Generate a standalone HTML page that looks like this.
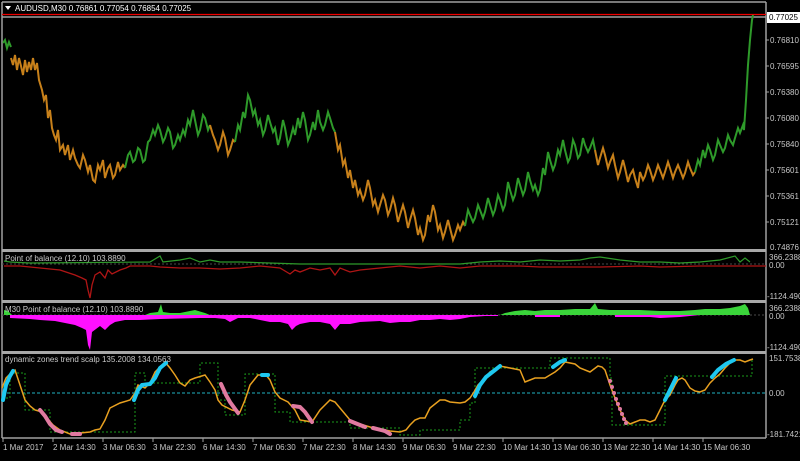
<!DOCTYPE html><html><head><style>
body{margin:0;background:#000;width:800px;height:456px;overflow:hidden;font-family:"Liberation Sans",sans-serif}
svg text{font-family:"Liberation Sans",sans-serif;font-size:8px;fill:#c8c8c8}
</style></head><body>
<svg width="800" height="456" viewBox="0 0 800 456" xmlns="http://www.w3.org/2000/svg">
<rect width="800" height="456" fill="#000"/>
<g fill="none" stroke="#a0a0a0" stroke-width="1.5">
<line x1="2" y1="2" x2="766" y2="2"/>
<line x1="2" y1="2" x2="2" y2="438"/>
<line x1="766" y1="2" x2="766" y2="438"/>
<line x1="2" y1="438" x2="766" y2="438"/>
<line x1="2" y1="17" x2="766" y2="17"/>
</g>
<rect x="2" y="249" width="764" height="3" fill="#a8a8a8"/>
<rect x="2" y="300" width="764" height="3" fill="#a8a8a8"/>
<rect x="2" y="351" width="764" height="3" fill="#a8a8a8"/>
<line x1="2" y1="14.5" x2="766" y2="14.5" stroke="#e00" stroke-width="1.2"/>
<path d="M5 6 L11 6 L8 10Z" fill="#fff"/>
<text x="15" y="11" style="fill:#fff">AUDUSD,M30  0.76861 0.77054 0.76854 0.77025</text>
<g fill="none" stroke-width="2" stroke-linejoin="miter">
<polyline stroke="#2e9a2a" points="3,43 5,40 7,48 9,42 11,47"/>
<polyline stroke="#c7801a" points="11,58 13,65 15,55 17,70 19,58 21,66 23,75 25,60 27,72 29,62 31,70 33,58 35,70 37,63 39,80 42,90 44,100 46,95 48,118 50,110 52,128 54,135 56,140 58,130 60,150 63,145 65,155 68,145 70,160 73,150 75,158 78,165 80,168 83,155 85,160 88,172 90,165 93,180 95,182 98,165 100,170 103,160 105,178 108,168 110,165 113,178 115,175 118,162 120,170 123,165 125,168"/>
<polyline stroke="#2e9a2a" points="125,168 128,155 130,152 133,162 135,160 138,148 140,150 143,162 145,160 148,142 150,140 153,130 155,135 158,125 160,130 163,142 165,138 168,128 170,132 173,148 175,145 178,135 180,140 183,130 185,135 188,120 190,125 193,110 195,120 198,135 200,130 203,115 205,118 208,130 210,125"/>
<polyline stroke="#c7801a" points="210,125 213,135 215,140 218,150 220,145 223,132 225,138 228,155 230,150 233,140 235,142"/>
<polyline stroke="#2e9a2a" points="235,142 238,125 240,130 243,112 245,118 248,95 250,100 253,115 255,110 258,125 260,120 263,135 265,130 268,115 270,122 273,132 275,128 278,145 280,138 283,120 285,128 288,145 290,140 293,128 295,135 298,118 300,128 303,112 305,120 308,140 310,135 313,122 315,130 318,110 320,122 323,130 325,125 328,112 330,118 333,128 335,132"/>
<polyline stroke="#c7801a" points="335,132 338,150 340,145 343,165 345,160 348,178 350,170 353,188 355,180 358,195 360,190 363,200 365,195 368,180 370,188 373,205 375,200 378,212 380,205 383,195 385,200 388,215 390,210 393,198 395,205 398,222 400,215 403,205 405,212 408,228 410,220 413,210 415,218 418,235 420,228 423,240 425,235 428,215 430,222 433,205 435,212 438,230 440,225 443,238 445,232 448,220 450,228 453,240 455,235 458,225 460,230 463,222 465,226"/>
<polyline stroke="#2e9a2a" points="465,226 468,210 470,215 473,222 475,218 478,205 480,210 483,218 485,212 488,198 490,205 493,215 495,210 498,195 500,200 503,210 505,205 508,182 510,190 513,200 515,195 518,178 520,185 523,195 525,190 528,172 530,180 533,190 535,185 538,195 540,190 543,168 545,175 548,152 550,160 553,170 555,165 558,150 560,155 563,140 565,150 568,162 570,158 573,140 575,145 578,158 580,155 583,138 585,145 588,152 590,148 593,140 595,150"/>
<polyline stroke="#c7801a" points="595,150 598,165 600,158 603,148 605,155 608,168 610,162 613,155 615,165 618,178 620,172 623,160 625,168 628,182 630,175 633,170 635,178 638,188 640,172 643,180 645,176 648,165 650,170 653,180 655,175 658,165 660,170 663,178 665,172 668,162 670,168 673,178 675,172 678,165 680,170 683,178 685,173 688,162 690,168 693,175 695,172"/>
<polyline stroke="#2e9a2a" points="695,172 698,160 700,165 703,150 705,158 708,145 710,150 713,160 715,155 718,140 720,145 723,152 725,148 728,135 730,140 733,145 735,138 738,128 740,133 743,125 744,130 746,100 748,65 750,40 752,20 753,15"/>
</g>
<line x1="2" y1="264" x2="766" y2="264" stroke="#4a4a4a" stroke-dasharray="2,2"/>
<polyline fill="none" stroke="#b01515" stroke-width="1.3" points="4,266 20,266 40,268 60,270 75,275 82,278 86,280 88,290 90,298 92,285 95,275 100,272 105,278 108,270 112,274 120,270 126,268 130,266 140,266 150,266 160,267 180,268 200,268 220,269 240,268 260,266 280,268 290,274 295,270 300,272 310,268 320,270 330,268 335,275 340,268 350,272 360,270 380,268 400,266 420,268 440,266 460,268 480,266 500,266 520,266 540,267 560,267 600,267 640,266 660,267 700,266 720,266 766,266"/>
<polyline fill="none" stroke="#2e9a2a" stroke-width="1.2" points="4,261 10,262 30,263 150,262 160,256 163,262 180,260 190,258 200,262 210,260 220,262 240,262 300,264 420,264 460,264 480,262 500,261 520,262 540,260 560,261 580,260 590,258 600,257 620,260 640,262 660,262 680,263 700,262 720,260 735,256 740,262 745,258 750,262"/>
<text x="5" y="261">Point of balance (12.10) 103.8890</text>
<line x1="2" y1="315" x2="766" y2="315" stroke="#4a4a4a" stroke-dasharray="2,2"/>
<polygon fill="#ff10ff" points="10,315 10,318 30,319 40,320 55,321 65,323 75,325 82,328 86,330 88,345 90,350 92,332 100,326 105,330 110,325 115,322 125,320 140,320 160,319 200,318 215,318 225,319 230,322 238,318 250,318 260,320 270,322 280,322 288,324 292,330 296,326 300,324 310,322 320,322 330,324 335,330 340,324 350,324 360,322 380,321 390,323 400,322 410,322 420,320 430,320 440,319 450,320 460,319 470,317 485,316 498,316 498,315"/>
<polygon fill="#ff10ff" points="535,315 535,317 560,317 560,315"/>
<polygon fill="#ff10ff" points="615,315 615,317 650,317 660,318 680,317 690,316 700,315"/>
<polygon fill="#3ad43a" points="4,315 4,310 8,311 12,315 145,315 150,313 158,312 161,304 163,312 170,313 180,313 185,312 195,310 205,313 210,315 500,315 505,313 515,311 525,310 535,311 545,310 560,310 575,309 590,309 595,303 598,309 610,310 640,310 660,311 680,311 695,310 705,309 720,309 730,308 740,306 745,304 748,308 750,315"/>
<text x="5" y="312">M30 Point of balance (12.10) 103.8890</text>
<line x1="2" y1="393" x2="766" y2="393" stroke="#1fb0c0" stroke-dasharray="3,2"/>
<polyline fill="none" stroke="#1a9a1a" stroke-dasharray="2,2" points="2,398 10,398 10,373 25,373 25,410 50,410 50,432 135,432 135,373 145,373 145,383 200,383 200,363 218,363 218,400 225,400 225,415 245,415 245,374 275,374 275,412 290,412 290,422 350,422 350,428 400,428 400,435 420,435 420,430 460,430 460,420 470,420 470,403 475,403 475,368 550,368 550,358 610,358 610,378 612,378 612,425 665,425 665,376 752,376 752,358"/>
<polyline fill="none" stroke="#e8a020" stroke-width="1.5" points="2,388 6,378 12,372 15,370 20,385 25,400 30,406 35,410 42,412 47,418 53,425 60,430 70,434 80,433 90,432 95,430 100,429 105,420 110,408 120,403 130,400 135,393 138,385 145,388 150,383 155,372 165,362 170,368 175,375 180,383 185,386 190,380 195,378 205,375 210,382 215,390 218,400 222,405 232,410 240,412 245,400 250,385 258,375 266,375 270,380 275,392 280,398 288,402 295,410 300,420 312,422 320,410 330,400 335,402 340,408 350,420 360,424 370,427 380,429 390,431 400,432 406,430 410,425 415,420 420,418 425,418 430,408 440,400 445,400 450,402 460,403 465,402 470,398 474,392 478,385 485,378 490,372 500,366 510,368 520,370 525,382 530,380 535,378 545,378 550,375 555,372 560,368 565,362 575,364 580,368 590,372 598,366 602,367 605,370 610,385 615,398 620,410 625,420 630,424 635,422 640,420 645,420 650,422 655,420 660,410 665,400 670,395 675,385 678,380 682,378 685,380 690,388 695,391 700,392 705,390 710,383 715,378 720,374 725,368 730,363 735,360 740,360 745,362 750,360 753,359"/>
<g stroke-linecap="round" fill="none" stroke-width="4">
<polyline stroke="#1ec8f0" points="3,400 6,385 10,376 13,371"/>
<polyline stroke="#1ec8f0" points="134,400 138,390 142,385 150,384 155,378 160,368 166,363"/>
<polyline stroke="#1ec8f0" points="262,375 268,375"/>
<polyline stroke="#1ec8f0" points="475,396 480,385 486,377 495,370 500,366"/>
<polyline stroke="#1ec8f0" points="553,367 560,362 565,360"/>
<polyline stroke="#1ec8f0" points="665,400 670,390 676,378"/>
<polyline stroke="#1ec8f0" points="712,377 718,370 726,364 734,360"/>
<polyline stroke="#e07aa0" points="40,410 45,416 50,424 56,430 62,432"/>
<polyline stroke="#e07aa0" points="72,434 80,434"/>
<polyline stroke="#e07aa0" points="221,384 226,395 230,402 238,413"/>
<polyline stroke="#e07aa0" points="293,406 300,407 305,412 312,422"/>
<polyline stroke="#e07aa0" points="350,421 365,427"/>
<polyline stroke="#e07aa0" points="373,428 385,431 390,434"/>
</g>
<g fill="#e07aa0"><circle cx="610" cy="381" r="2"/><circle cx="612" cy="387" r="2"/><circle cx="614" cy="393" r="2"/><circle cx="616" cy="399" r="2"/><circle cx="618" cy="404" r="2"/><circle cx="620" cy="409" r="2"/><circle cx="622" cy="414" r="2"/><circle cx="624" cy="419" r="2"/><circle cx="626" cy="423" r="2"/></g>
<text x="5" y="362">dynamic zones trend scalp 135.2008 134.0563</text>
<rect x="767" y="12" width="33" height="11" fill="#fff"/>
<g>
<text x="769" y="20" style="fill:#000">0.77025</text>
<text x="770" y="43">0.76810</text>
<text x="770" y="69">0.76595</text>
<text x="770" y="95">0.76380</text>
<text x="770" y="121">0.76080</text>
<text x="770" y="147">0.75840</text>
<text x="770" y="173">0.75601</text>
<text x="770" y="199">0.75361</text>
<text x="770" y="225">0.75121</text>
<text x="770" y="250">0.74876</text>
<text x="769" y="260">366.2388</text>
<text x="769" y="268">0.00</text>
<text x="767" y="299">-1124.490</text>
<text x="769" y="311">366.2388</text>
<text x="769" y="319">0.00</text>
<text x="767" y="350">-1124.490</text>
<text x="769" y="361">151.7538</text>
<text x="769" y="396">0.00</text>
<text x="767" y="437">-181.7421</text>
</g>
<g stroke="#a0a0a0"><line x1="766" y1="40" x2="769" y2="40"/><line x1="766" y1="66" x2="769" y2="66"/><line x1="766" y1="92" x2="769" y2="92"/><line x1="766" y1="118" x2="769" y2="118"/><line x1="766" y1="144" x2="769" y2="144"/><line x1="766" y1="170" x2="769" y2="170"/><line x1="766" y1="196" x2="769" y2="196"/><line x1="766" y1="222" x2="769" y2="222"/></g>
<g stroke="#a0a0a0"><line x1="3" y1="438" x2="3" y2="442"/><line x1="53" y1="438" x2="53" y2="442"/><line x1="103" y1="438" x2="103" y2="442"/><line x1="153" y1="438" x2="153" y2="442"/><line x1="203" y1="438" x2="203" y2="442"/><line x1="253" y1="438" x2="253" y2="442"/><line x1="303" y1="438" x2="303" y2="442"/><line x1="353" y1="438" x2="353" y2="442"/><line x1="403" y1="438" x2="403" y2="442"/><line x1="453" y1="438" x2="453" y2="442"/><line x1="503" y1="438" x2="503" y2="442"/><line x1="553" y1="438" x2="553" y2="442"/><line x1="603" y1="438" x2="603" y2="442"/><line x1="653" y1="438" x2="653" y2="442"/><line x1="703" y1="438" x2="703" y2="442"/></g>
<g>
<text x="3" y="450">1 Mar 2017</text><text x="53" y="450">2 Mar 14:30</text><text x="103" y="450">3 Mar 06:30</text><text x="153" y="450">3 Mar 22:30</text><text x="203" y="450">6 Mar 14:30</text><text x="253" y="450">7 Mar 06:30</text><text x="303" y="450">7 Mar 22:30</text><text x="353" y="450">8 Mar 14:30</text><text x="403" y="450">9 Mar 06:30</text><text x="453" y="450">9 Mar 22:30</text><text x="503" y="450">10 Mar 14:30</text><text x="553" y="450">13 Mar 06:30</text><text x="603" y="450">13 Mar 22:30</text><text x="653" y="450">14 Mar 14:30</text><text x="703" y="450">15 Mar 06:30</text>
</g>
</svg>
</body></html>
